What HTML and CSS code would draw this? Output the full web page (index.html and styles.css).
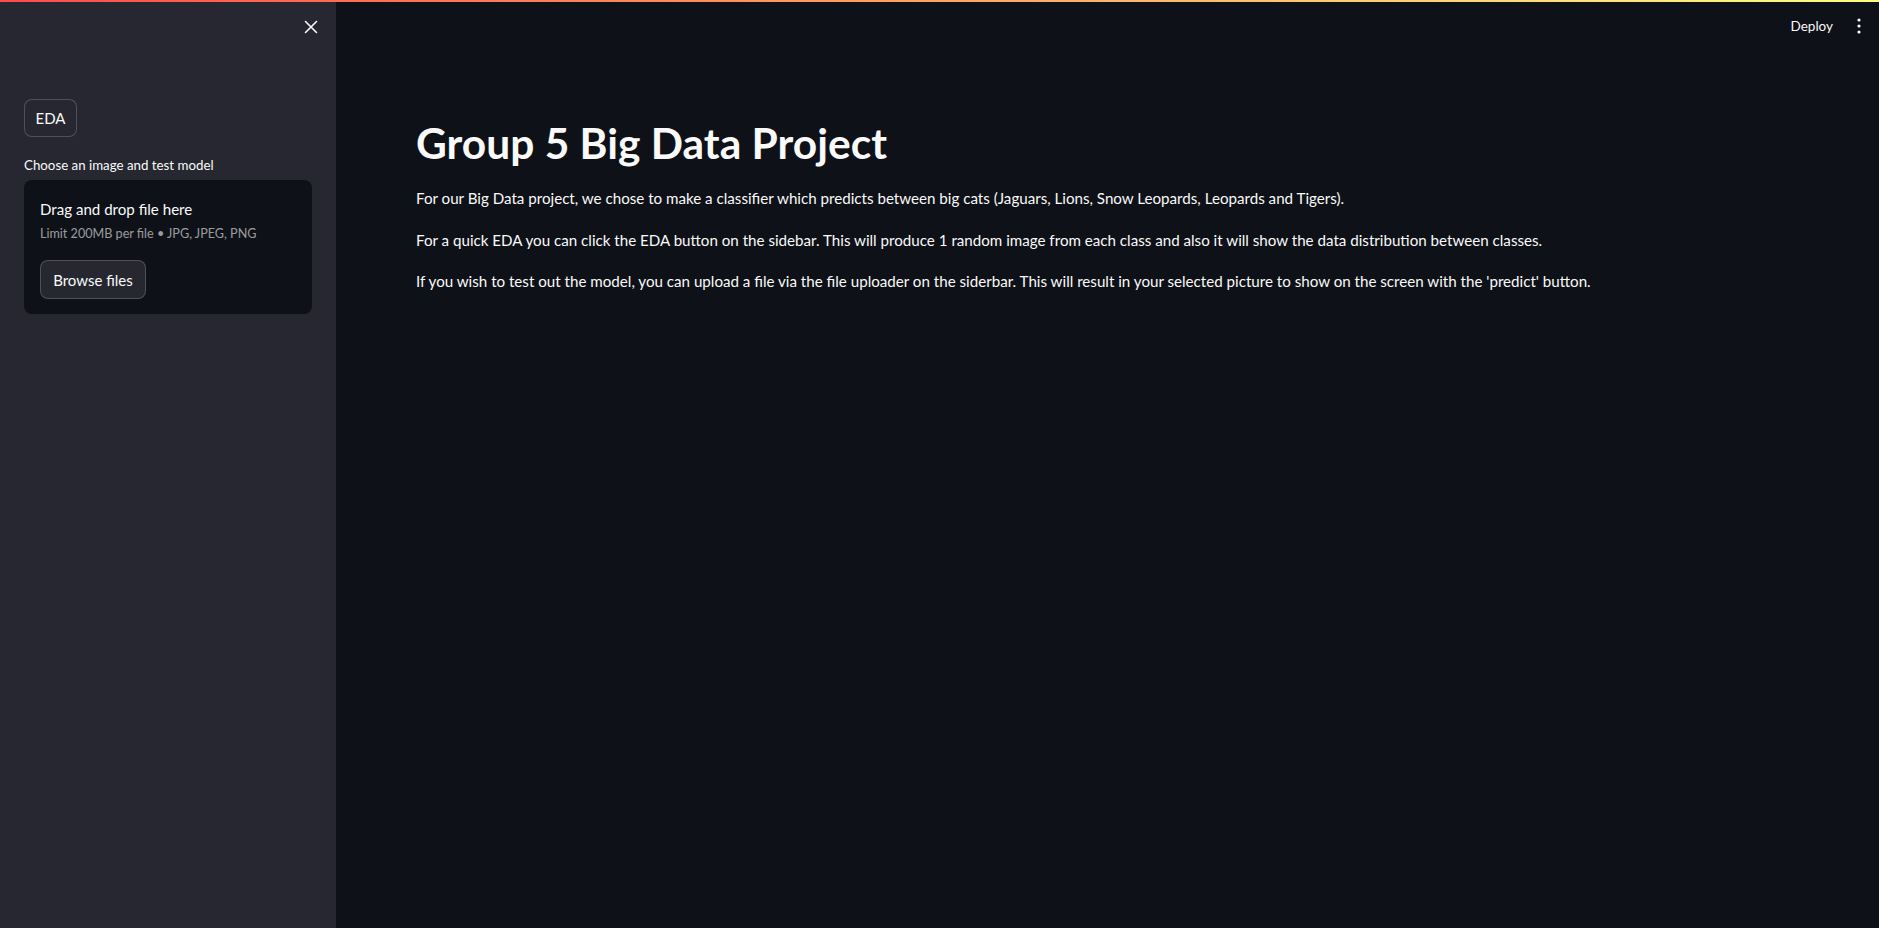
FILE: index.html
```html
<!DOCTYPE html>
<html lang="en">
<head>
<meta charset="utf-8">
<title>Group 5 Big Data Project</title>
<link rel="stylesheet" href="styles.css">
</head>
<body>
<div class="decoration"></div>
<div class="app">
  <aside class="sidebar">
    <div class="sidebar-top">
      <button class="icon-btn close-btn" aria-label="Close sidebar">
        <svg width="14" height="14" viewBox="0 0 14 14"><path d="M1.5 1.5 L12.5 12.5 M12.5 1.5 L1.5 12.5" stroke="#fafafa" stroke-width="1.6" stroke-linecap="round"/></svg>
      </button>
    </div>
    <div class="sidebar-content">
      <button class="st-btn eda-btn">EDA</button>
      <label class="widget-label">Choose an image and test model</label>
      <section class="uploader">
        <div class="drop-title">Drag and drop file here</div>
        <div class="drop-limit">Limit 200MB per file • JPG, JPEG, PNG</div>
        <button class="st-btn browse-btn">Browse files</button>
      </section>
    </div>
  </aside>
  <main class="main">
    <header class="topbar">
      <span class="deploy">Deploy</span>
      <button class="icon-btn menu-btn" aria-label="Main menu">
        <svg width="4" height="16" viewBox="0 0 4 16"><circle cx="2" cy="2" r="1.6" fill="#fafafa"/><circle cx="2" cy="8" r="1.6" fill="#fafafa"/><circle cx="2" cy="14" r="1.6" fill="#fafafa"/></svg>
      </button>
    </header>
    <div class="block">
      <h1 class="title">Group 5 Big Data Project</h1>
      <p>For our Big Data project, we chose to make a classifier which predicts between big cats (Jaguars, Lions, Snow Leopards, Leopards and Tigers).</p>
      <p>For a quick EDA you can click the EDA button on the sidebar. This will produce 1 random image from each class and also it will show the data distribution between classes.</p>
      <p>If you wish to test out the model, you can upload a file via the file uploader on the siderbar. This will result in your selected picture to show on the screen with the 'predict' button.</p>
    </div>
  </main>
</div>
</body>
</html>
```

FILE: styles.css
```css
* { box-sizing: border-box; }
html, body {
  margin: 0;
  height: 100%;
  background: #0e1117;
  color: #fafafa;
  font-family: Lato, "Noto Sans", sans-serif;
  overflow: hidden;
}
.decoration {
  position: fixed;
  top: 0; left: 0; right: 0;
  height: 2px;
  background: linear-gradient(90deg, #ff4b4b, #fffd80);
  z-index: 10;
}
.app {
  display: flex;
  height: 100%;
}
.sidebar {
  width: 336px;
  flex: none;
  background: #262730;
  display: flex;
  flex-direction: column;
}
.sidebar-top {
  display: flex;
  justify-content: flex-end;
  padding: 20px 18px 0 0;
}
.icon-btn {
  background: none;
  border: none;
  padding: 0;
  display: flex;
  align-items: center;
  justify-content: center;
  cursor: pointer;
}
.close-btn { width: 14px; height: 14px; }
.sidebar-content {
  padding: 65px 24px 0 24px;
  display: flex;
  flex-direction: column;
  align-items: flex-start;
}
.st-btn {
  font-family: inherit;
  color: #fafafa;
  background: #262730;
  border: 1px solid rgba(250, 250, 250, 0.2);
  border-radius: 8px;
  font-size: 15px;
  cursor: pointer;
}
.eda-btn {
  width: 53px;
  height: 38px;
  padding: 0;
}
.widget-label {
  font-size: 13.3px;
  margin-top: 19px;
  line-height: 18px;
}
.uploader {
  margin-top: 6px;
  width: 288px;
  height: 134px;
  background: #0e1117;
  border-radius: 8px;
  padding: 17px 16px 0 16px;
  display: flex;
  flex-direction: column;
  align-items: flex-start;
}
.drop-title {
  font-size: 15.1px;
  line-height: 20px;
  margin-top: 2px;
}
.drop-limit {
  font-size: 12.6px;
  color: rgba(250, 250, 250, 0.6);
  margin-top: 6px;
  line-height: 18px;
}
.browse-btn {
  margin-top: 17px;
  width: 106px;
  height: 39px;
  padding: 0;
}
.main {
  flex: 1;
  position: relative;
  display: flex;
  flex-direction: column;
}
.topbar {
  display: flex;
  justify-content: flex-end;
  align-items: center;
  height: 52px;
  padding-right: 18px;
  gap: 24px;
}
.deploy {
  font-size: 13.5px;
}
.block {
  padding: 65px 80px 0 80px;
}
.title {
  font-size: 42.5px;
  font-weight: 700;
  line-height: 52px;
  margin: 0 0 17px 0;
}
p {
  font-size: 15.15px;
  line-height: 25.6px;
  margin: 0 0 16px 0;
}
```
